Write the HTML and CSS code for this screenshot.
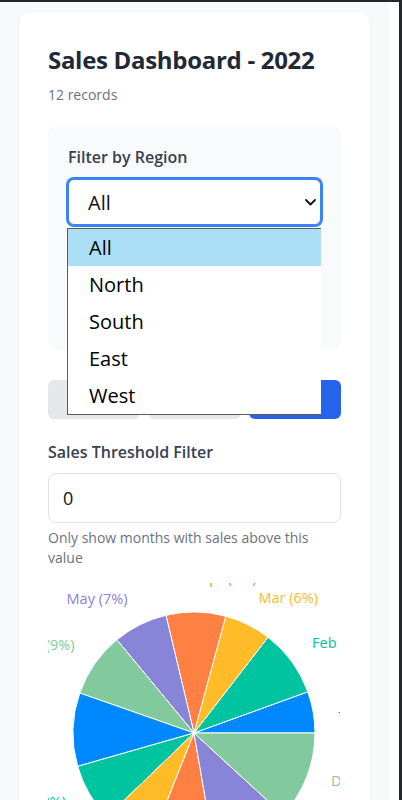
FILE: index.html
```html
<!DOCTYPE html>
<html lang="en">
<head>
<meta charset="utf-8">
<title>Sales Dashboard - 2022</title>
<link rel="stylesheet" href="styles.css">
</head>
<body>
<div class="frame">
  <main class="page">
    <section class="card">
      <h1 class="title">Sales Dashboard - 2022</h1>
      <p class="count">12 records</p>

      <div class="panel">
        <div class="field">
          <div class="field-label">Filter by Region</div>
          <div class="select-wrap">
            <div class="select is-focused">
              <span>All</span>
              <svg class="chev" width="11" height="7" viewBox="0 0 11 7" aria-hidden="true"><path d="M1 1l4.5 4.5L10 1" fill="none" stroke="#111" stroke-width="1.8" stroke-linecap="round" stroke-linejoin="round"/></svg>
            </div>
            <ul class="options">
              <li class="option is-active">All</li>
              <li class="option">North</li>
              <li class="option">South</li>
              <li class="option">East</li>
              <li class="option">West</li>
            </ul>
          </div>
        </div>
        <div class="field field-plain">
          <div class="select" aria-label="Sort by"></div>
        </div>
      </div>

      <div class="actions">
        <button class="btn btn-gray" aria-label="Reset"></button>
        <button class="btn btn-gray" aria-label="Sort"></button>
        <button class="btn btn-blue" aria-label="Apply"></button>
      </div>

      <div class="threshold">
        <div class="field-label">Sales Threshold Filter</div>
        <div class="input">0</div>
        <p class="help">Only show months with sales above this value</p>
      </div>

      <div class="chart">
        <svg class="pie" width="292" height="300" viewBox="0 0 292 300">
          <g stroke="#fff" stroke-width="1" stroke-linejoin="round">
            <path fill="#0088FE" d="M146 150L267 150A121 121 0 0 0 259.78 108.81Z"/>
            <path fill="#00C49F" d="M146 150L259.78 108.81A121 121 0 0 0 219.99 54.26Z"/>
            <path fill="#FFBB28" d="M146 150L219.99 54.26A121 121 0 0 0 177.73 33.23Z"/>
            <path fill="#FF8042" d="M146 150L177.73 33.23A121 121 0 0 0 117.96 32.29Z"/>
            <path fill="#8884D8" d="M146 150L117.96 32.29A121 121 0 0 0 68.87 56.77Z"/>
            <path fill="#82CA9D" d="M146 150L68.87 56.77A121 121 0 0 0 31.8 110.01Z"/>
            <path fill="#0088FE" d="M146 150L31.8 110.01A121 121 0 0 0 29.68 183.35Z"/>
            <path fill="#00C49F" d="M146 150L29.68 183.35A121 121 0 0 0 58.81 233.9Z"/>
            <path fill="#FFBB28" d="M146 150L58.81 233.9A121 121 0 0 0 101.46 262.51Z"/>
            <path fill="#FF8042" d="M146 150L101.46 262.51A121 121 0 0 0 166.59 269.23Z"/>
            <path fill="#8884D8" d="M146 150L166.59 269.23A121 121 0 0 0 235.07 231.9Z"/>
            <path fill="#82CA9D" d="M146 150L235.07 231.9A121 121 0 0 0 267 150Z"/>
          </g>
          <g class="labels">
            <text x="291.8" y="121.4" fill="#0088FE" text-anchor="start">Jan (6%)</text>
            <text x="264" y="59" fill="#00C49F" text-anchor="start">Feb (9%)</text>
            <text x="210.5" y="14" fill="#FFBB28" text-anchor="start">Mar (6%)</text>
            <text x="152" y="-6" fill="#FF8042" text-anchor="start">Apr (8%)</text>
            <text x="79.5" y="15" fill="#8884D8" text-anchor="end">May (7%)</text>
            <text x="26.5" y="61.5" fill="#82CA9D" text-anchor="end">Jun (9%)</text>
            <text x="-1" y="142.7" fill="#0088FE" text-anchor="end">Jul (10%)</text>
            <text x="18" y="218" fill="#00C49F" text-anchor="end">Aug (8%)</text>
            <text x="63.6" y="269.9" fill="#FFBB28" text-anchor="end">Sep (7%)</text>
            <text x="130.8" y="294.2" fill="#FF8042" text-anchor="end">Oct (9%)</text>
            <text x="216.8" y="277" fill="#8884D8" text-anchor="start">Nov (10%)</text>
            <text x="283" y="197" fill="#82CA9D" text-anchor="start">Dec (12%)</text>
          </g>
        </svg>
      </div>
    </section>
  </main>
  <div class="gutter"></div>
  <div class="edge"></div>
</div>
</body>
</html>
```

FILE: styles.css
```css
* { box-sizing: border-box; }

html, body {
  margin: 0;
  padding: 0;
  height: 100%;
  overflow: hidden;
}

body {
  font-family: "Open Sans", "Noto Sans", sans-serif;
  background: #fff;
  color: #1f2937;
}

.frame {
  display: flex;
  height: 100%;
  border-top: 2px solid #24272d;
}

.page {
  flex: 1;
  min-width: 0;
  background: #f8f9fa;
  padding: 10px 19px;
}

.gutter {
  width: 10px;
  background: #fff;
}

.edge {
  width: 3px;
  background: #24272d;
}

.card {
  background: #fff;
  border-radius: 12px;
  box-shadow: 0 1px 3px rgba(0, 0, 0, 0.08), 0 1px 2px rgba(0, 0, 0, 0.04);
  padding: 32px 29px 32px;
}

.title {
  margin: 0;
  font-size: 24px;
  line-height: 32px;
  font-weight: 700;
  letter-spacing: -0.3px;
  color: #1f2937;
}

.count {
  margin: 9px 0 0;
  font-size: 14px;
  line-height: 20px;
  color: #6b7280;
}

.panel {
  margin-top: 20px;
  background: #f9fafb;
  border-radius: 10px;
  padding: 20px 20px 21px;
}

.field-plain {
  margin-top: 58px;
}

.field-label {
  font-size: 16px;
  line-height: 24px;
  font-weight: 600;
  color: #374151;
  margin-bottom: 10px;
}

.select-wrap {
  position: relative;
}

.select {
  height: 46px;
  display: flex;
  align-items: center;
  justify-content: space-between;
  padding: 0 4px 0 19px;
  background: #fff;
  border: 1px solid #d1d5db;
  border-radius: 6px;
  font-size: 20px;
  color: #111;
}

.select.is-focused {
  border-color: #3b82f6;
  box-shadow: 0 0 0 2px #3b82f6;
}

.chev {
  display: block;
  flex: none;
}

.options {
  position: absolute;
  left: -1px;
  right: 0;
  top: calc(100% + 3px);
  margin: 0;
  padding: 0;
  list-style: none;
  background: #fff;
  border: 1px solid #5b5b5b;
  border-right: 0;
  z-index: 5;
  font-size: 20px;
  color: #000;
}

.option {
  height: 37px;
  line-height: 37px;
  padding-left: 21px;
}

.option.is-active {
  background: #abdff5;
}

.actions {
  margin-top: 30px;
  display: grid;
  grid-template-columns: repeat(3, 1fr);
  gap: 8px;
}

.btn {
  height: 39px;
  border: 0;
  border-radius: 6px;
  font-family: inherit;
  font-size: 15px;
  font-weight: 600;
  padding: 0;
}

.btn-gray {
  background: #e5e7eb;
  color: #374151;
}

.btn-blue {
  background: #2563eb;
  color: #fff;
}

.threshold {
  margin-top: 21px;
}

.threshold .field-label {
  margin-bottom: 9px;
}

.input {
  height: 50px;
  display: flex;
  align-items: center;
  padding: 0 14px;
  background: #fff;
  border: 1px solid #e0e2e7;
  border-radius: 8px;
  font-size: 18px;
  color: #111;
}

.help {
  margin: 5px 0 0;
  font-size: 14px;
  line-height: 20px;
  color: #6b7280;
}

.chart {
  margin-top: 15px;
  height: 300px;
}

.pie {
  display: block;
}

.labels text {
  font-family: "Open Sans", "Noto Sans", sans-serif;
  font-size: 14.5px;
  dominant-baseline: central;
}
```
